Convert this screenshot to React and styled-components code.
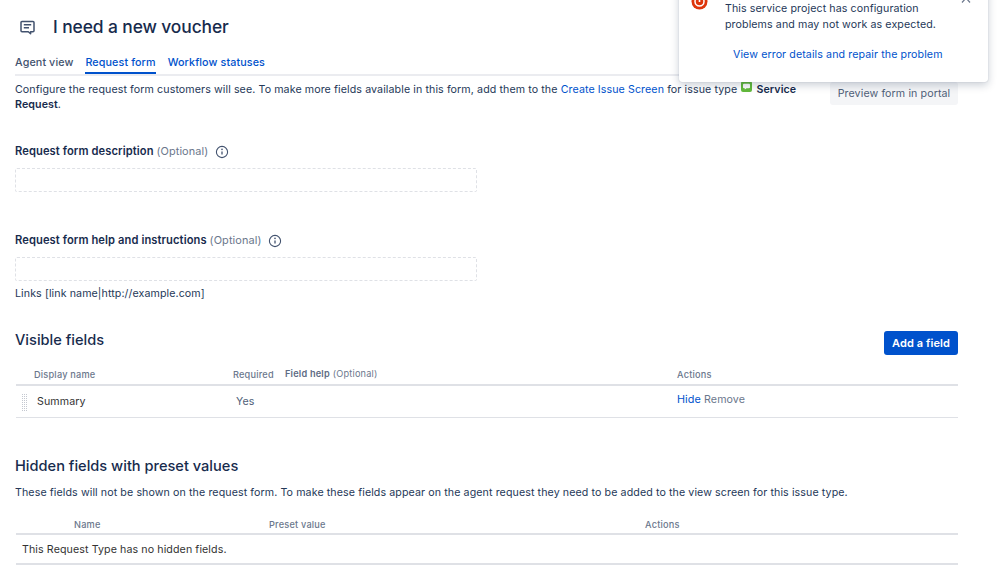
import React from "react";
import styled, { createGlobalStyle } from "styled-components";

const Global = createGlobalStyle`
  html, body { margin: 0; padding: 0; background: #fff; }
  body { font-family: Inter, "Liberation Sans", sans-serif; font-size: 11px; line-height: 15px; color: #253858; overflow: hidden; }
`;
const Page = styled.div`
  position: relative; width: 999px; height: 573px; overflow: hidden; box-sizing: border-box;
  padding: 15px 41px 0 15px; display: flex; flex-direction: column;
`;
const Header = styled.header`
  display: flex; align-items: center; gap: 18px; height: 24px; padding-left: 5px;
`;
const Title = styled.h1`
  margin: 0; font-size: 17.4px; line-height: 24px; font-weight: 500; color: #172b4d; letter-spacing: -0.1px;
`;
const Tabs = styled.nav`
  display: flex; gap: 12px; margin-top: 11px; height: 24px; border-bottom: 2px solid #ebecf0; box-sizing: content-box;
`;
const Tab = styled.a`
  display: block; height: 24px; box-sizing: border-box; padding-top: 5px; line-height: 15px; font-size: 10.75px; letter-spacing: 0.1px; font-weight: 500;
  color: ${p => p.$muted ? "#42526e" : "#0052cc"};
  border-bottom: 2px solid ${p => p.$active ? "#0052cc" : "transparent"};
  margin-bottom: -2px;
`;
const IntroRow = styled.div`
  display: flex; justify-content: space-between; align-items: flex-start; margin-top: 5px;
`;
const Intro = styled.p`
  margin: 0; width: 790px; font-size: 10.65px; line-height: 15px; color: #253858; letter-spacing: 0.1px;
`;
const Link = styled.a`
  color: #0052cc;
`;
const Strong = styled.strong`
  font-weight: 600; color: #172b4d;
`;
const TypeIcon = styled.svg`
  width: 11px; height: 11px; vertical-align: 1px; margin: 0 1px;
`;
const PreviewButton = styled.button`
  width: 128px; height: 23px; margin-top: 1px; border: 0; border-radius: 3px; background: #f4f5f7; color: #505f79;
  font: 400 10.65px Inter, sans-serif; letter-spacing: 0.1px; padding: 0;
`;
const FieldLabel = styled.div`
  display: flex; align-items: center; height: 15px; margin-top: ${p => p.$top}px; font-size: 11.15px; letter-spacing: 0.1px;
`;
const LabelText = styled.span`
  font-weight: 600; color: #172b4d; white-space: pre;
`;
const Optional = styled.span`
  color: #6b778c; white-space: pre; font-size: 10.9px;
`;
const InfoIcon = styled.svg`
  width: 14px; height: 14px; margin-left: 7px; color: #42526e;
`;
const InlineEdit = styled.div`
  width: 462px; height: 24px; margin-top: ${p => p.$top}px; box-sizing: border-box; border: 1px dashed #dfe1e6; border-radius: 2px;
`;
const Hint = styled.div`
  margin-top: 5px; font-size: 10.65px; letter-spacing: 0.1px; color: #253858;
`;
const SectionHead = styled.div`
  display: flex; justify-content: space-between; align-items: flex-start; height: 24px; margin-top: 30px;
`;
const H2 = styled.h2`
  margin: ${p => p.$top}px 0 0; font-size: 14.6px; line-height: 22px; font-weight: 500; color: #172b4d;
`;
const PrimaryButton = styled.button`
  width: 74px; height: 24px; border: 0; border-radius: 3px; background: #0052cc; color: #fff; padding: 0;
  font: 600 11px Inter, sans-serif; letter-spacing: 0.1px;
`;
const Table = styled.div`
  display: flex; flex-direction: column; margin-left: 1px;
`;
const HeadRow = styled.div`
  display: grid; grid-template-columns: ${p => p.$cols}; height: ${p => p.$h}px; margin-top: ${p => p.$top}px;
  border-bottom: 2px solid #dfe1e6; box-sizing: content-box; align-items: center;
  font-size: 9.2px; font-weight: 500; color: #6b778c; letter-spacing: 0.2px;
`;
const HeadCell = styled.span`
  padding-left: ${p => p.$pad || 0}px; white-space: pre; position: relative; top: 1px;
`;
const HelpCell = styled.span`
  color: #6b778c; font-weight: 400; white-space: pre;
`;
const HelpStrong = styled.span`
  font-weight: 600; color: #5e6c84;
`;
const BodyRow = styled.div`
  display: grid; grid-template-columns: ${p => p.$cols}; align-items: center; height: 31px; border-bottom: 1px solid #dfe1e6;
  font-size: 10.65px; letter-spacing: 0.1px; color: #333;
`;
const Grip = styled.span`
  display: block; width: 6px; height: 18px; margin-left: 6px;
  background:
    linear-gradient(#fff 1px, transparent 1px) 0 0 / 2px 2px,
    linear-gradient(90deg, #c4c8d0 1px, #fff 1px) 0 0 / 2px 2px;
`;
const NameCell = styled.div`
  display: flex; align-items: center; gap: 9px;
`;
const YesCell = styled.span`
  padding-left: 3px; color: #505f79;
`;
const Actions = styled.span`
  color: #6b778c; position: relative; top: -2px;
`;
const ActionLink = styled.a`
  color: #0052cc; font-size: 10.8px;
`;
const Lead = styled.p`
  margin: 8px 0 0; font-size: 10.65px; letter-spacing: 0.1px; line-height: 15px; color: #253858; white-space: nowrap;
`;
const EmptyRow = styled.div`
  height: 28px; display: flex; align-items: center; padding-left: 6px; border-bottom: 2px solid #dfe1e6;
  font-size: 10.65px; letter-spacing: 0.1px; color: #333; box-sizing: content-box;
`;
const Flag = styled.aside`
  position: absolute; left: 679px; top: -20px; width: 309px; height: 102px; box-sizing: border-box; background: #fff;
  border-radius: 3px; box-shadow: 0 3px 9px rgba(9,30,66,.22), 0 0 1px rgba(9,30,66,.3);
`;
const FlagIcon = styled.svg`
  position: absolute; left: 12px; top: 13px; width: 17px; height: 17px;
`;
const FlagClose = styled.svg`
  position: absolute; right: 17px; top: 13px; width: 10px; height: 13px;
`;
const FlagText = styled.p`
  margin: 0; position: absolute; left: 46px; top: 21px; width: 240px; font-size: 10.65px; line-height: 15.5px; letter-spacing: 0.1px; color: #253858;
`;
const FlagLink = styled.a`
  position: absolute; left: 54px; top: 67px; font-size: 10.65px; line-height: 15px; letter-spacing: 0.1px; color: #0052cc; white-space: nowrap;
`;

const Info = () => (
  <InfoIcon viewBox="0 0 14 14" fill="none" stroke="currentColor">
    <circle cx="7" cy="7" r="5.6" strokeWidth="1.1" />
    <path d="M7 6.4v3.2" strokeWidth="1.3" />
    <circle cx="7" cy="4.4" r=".8" fill="currentColor" stroke="none" />
  </InfoIcon>
);

export default function App() {
  return (
    <Page>
      <Global />
      <Header>
        <svg width="15" height="15" viewBox="0 0 15 15" fill="none">
          <path d="M2 1.5h11a1 1 0 0 1 1 1v8.2a1 1 0 0 1-1 1h-2.4v2l-2.3-2H2a1 1 0 0 1-1-1V2.500a1 1 0 0 1 1-1z" stroke="#42526e" strokeWidth="1.5" strokeLinejoin="round" />
          <path d="M3.800 4.800h7.400M3.800 7.800h5.200" stroke="#42526e" strokeWidth="1.400" />
        </svg>
        <Title>I need a new voucher</Title>
      </Header>
      <Tabs>
        <Tab $muted>Agent view</Tab>
        <Tab $active>Request form</Tab>
        <Tab>Workflow statuses</Tab>
      </Tabs>
      <IntroRow>
        <Intro>
          Configure the request form customers will see. To make more fields available in this form, add them to the{" "}
          <Link>Create Issue Screen</Link> for issue type{" "}
          <TypeIcon viewBox="0 0 11 11">
            <rect width="11" height="11" rx="2" fill="#63ba3c" />
            <path d="M3 2.800h5a1 1 0 0 1 1 1v2.400a1 1 0 0 1-1 1H5.500L3.800 8.600V7.200H3a1 1 0 0 1-1-1V3.800a1 1 0 0 1 1-1z" fill="#fff" />
          </TypeIcon>{" "}
          <Strong>Service</Strong> <Strong>Request</Strong>.
        </Intro>
        <PreviewButton>Preview form in portal</PreviewButton>
      </IntroRow>
      <FieldLabel $top={32}>
        <LabelText>Request form description </LabelText>
        <Optional>(Optional)</Optional>
        <Info />
      </FieldLabel>
      <InlineEdit $top={9} />
      <FieldLabel $top={41}>
        <LabelText>Request form help and instructions </LabelText>
        <Optional>(Optional)</Optional>
        <Info />
      </FieldLabel>
      <InlineEdit $top={9} />
      <Hint>Links [link name|http://example.com]</Hint>
      <SectionHead>
        <H2 $top={-2}>Visible fields</H2>
        <PrimaryButton>Add a field</PrimaryButton>
      </SectionHead>
      <Table>
        <HeadRow $cols="217px 52px 392px 1fr" $h={21} $top={8}>
          <HeadCell $pad={18}>Display name</HeadCell>
          <HeadCell>Required</HeadCell>
          <HelpCell><HelpStrong>Field help</HelpStrong> (Optional)</HelpCell>
          <HeadCell>Actions</HeadCell>
        </HeadRow>
        <BodyRow $cols="217px 444px 1fr">
          <NameCell><Grip />Summary</NameCell>
          <YesCell>Yes</YesCell>
          <Actions><ActionLink>Hide</ActionLink> Remove</Actions>
        </BodyRow>
      </Table>
      <H2 $top={37}>Hidden fields with preset values</H2>
      <Lead>These fields will not be shown on the request form. To make these fields appear on the agent request they need to be added to the view screen for this issue type.</Lead>
      <Table>
        <HeadRow $cols="253px 376px 1fr" $h={20} $top={13}>
          <HeadCell $pad={58}>Name</HeadCell>
          <HeadCell>Preset value</HeadCell>
          <HeadCell>Actions</HeadCell>
        </HeadRow>
        <EmptyRow>This Request Type has no hidden fields.</EmptyRow>
      </Table>
      <Flag>
        <FlagIcon viewBox="0 0 17 17">
          <circle cx="8.500" cy="8.500" r="8" fill="#de350b" />
          <circle cx="8.500" cy="8.500" r="4.500" fill="none" stroke="#fff" strokeWidth="1.500" />
          <path d="M8.500 5.500v3.500" stroke="#fff" strokeWidth="1.600" />
        </FlagIcon>
        <FlagClose viewBox="0 0 10 13" fill="none" stroke="#6b778c" strokeWidth="1.200">
          <path d="M1 9.500l4-4.500 4 4.500" />
        </FlagClose>
        <FlagText>This service project has configuration problems and may not work as expected.</FlagText>
        <FlagLink>View error details and repair the problem</FlagLink>
      </Flag>
    </Page>
  );
}
